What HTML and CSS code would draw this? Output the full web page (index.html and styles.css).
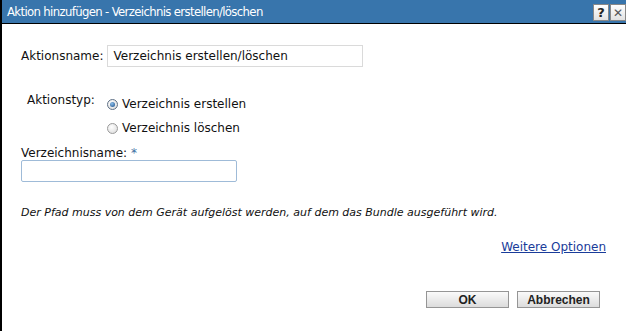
FILE: index.html
```html
<!DOCTYPE html>
<html lang="de">
<head>
    <meta charset="UTF-8">
    <title>Aktion hinzufügen</title>
    <link rel="stylesheet" href="styles.css">
</head>
<body>
    <div class="dialog">
        <div class="titlebar">
            <span class="title">Aktion hinzufügen - Verzeichnis erstellen/löschen</span>
            <div class="title-buttons">
                <span class="tbtn">?</span>
                <span class="tbtn close">&#x2715;</span>
            </div>
        </div>

        <div class="content">
            <div class="row name-row">
                <label for="action-name">Aktionsname:</label>
                <input type="text" id="action-name" class="text-input wide" value="Verzeichnis erstellen/löschen">
            </div>

            <div class="row type-row">
                <span class="type-label">Aktionstyp:</span>
                <div class="radios">
                    <label class="radio"><span class="dot checked"></span>Verzeichnis erstellen</label>
                    <label class="radio"><span class="dot"></span>Verzeichnis löschen</label>
                </div>
            </div>

            <div class="field">
                <label for="dir-name">Verzeichnisname: <span class="req">*</span></label>
                <input type="text" id="dir-name" class="text-input">
            </div>

            <p class="hint">Der Pfad muss von dem Gerät aufgelöst werden, auf dem das Bundle ausgeführt wird.</p>

            <div class="more">
                <a href="#">Weitere Optionen</a>
            </div>

            <div class="actions">
                <button type="button">OK</button>
                <button type="button">Abbrechen</button>
            </div>
        </div>
    </div>
</body>
</html>
```

FILE: styles.css
```css
body {
    margin: 0;
    background: #ffffff;
    font-family: "DejaVu Sans", sans-serif;
    font-size: 12px;
    color: #111;
}

.dialog {
    width: 626px;
    height: 331px;
    border-left: 2px solid #000;
    box-sizing: border-box;
}

.titlebar {
    height: 23px;
    background-color: #3875ac;
    border-bottom: 1px solid #000;
    display: flex;
    align-items: center;
    justify-content: space-between;
    padding-left: 5px;
}

.title {
    color: #fff;
    font: 13px "DejaVu Sans Condensed", sans-serif;
    letter-spacing: -0.65px;
}

.title-buttons {
    display: flex;
    gap: 1px;
    align-self: flex-end;
    margin-bottom: 2px;
}

.tbtn {
    width: 16px;
    height: 17px;
    background: linear-gradient(#ffffff, #e2e2e2);
    border: 1px solid #888;
    box-sizing: border-box;
    font: bold 13px "DejaVu Sans", sans-serif;
    color: #222;
    display: flex;
    align-items: center;
    justify-content: center;
}

.tbtn.close {
    font-weight: normal;
    font-size: 12px;
    color: #555;
}

.content {
    padding: 21px 0 0 19px;
}

.row {
    display: flex;
}

.name-row {
    align-items: center;
    gap: 4px;
}

.text-input {
    height: 22px;
    border: 1px solid #dadada;
    box-sizing: border-box;
    padding: 0 5px;
    font: 12px "DejaVu Sans", sans-serif;
    color: #111;
}

.text-input.wide {
    width: 256px;
}

.type-row {
    margin-top: 25px;
    align-items: flex-start;
}

.type-label {
    margin: 1px 0 0 6px;
    width: 80px;
}

.radios {
    display: flex;
    flex-direction: column;
    gap: 10px;
    margin-top: 5px;
}

.radio {
    display: flex;
    align-items: center;
    gap: 4px;
}

.dot {
    width: 11px;
    height: 11px;
    border-radius: 50%;
    border: 1px solid #9a9a9a;
    background: radial-gradient(circle at 40% 35%, #ffffff, #d8d8d8);
    box-sizing: border-box;
    position: relative;
}

.dot.checked {
    border-color: #5f7186;
}

.dot.checked::after {
    content: "";
    position: absolute;
    left: 2px;
    top: 2px;
    width: 5px;
    height: 5px;
    border-radius: 50%;
    background: radial-gradient(circle at 40% 35%, #8cc0ee, #1a4a80);
}

.field {
    margin-top: 11px;
}

.field label {
    display: block;
    margin-bottom: 0;
}

.req {
    color: #3c6ea3;
}

.field .text-input {
    width: 216px;
    border-color: #9fbbd8;
    border-radius: 2px;
}

.hint {
    font-style: italic;
    font-size: 11px;
    margin: 24px 0 0;
}

.more {
    text-align: right;
    margin: 21px 20px 0 0;
}

.more a {
    color: #1a3c9a;
}

.actions {
    display: flex;
    justify-content: flex-end;
    gap: 8px;
    margin: 37px 26px 0 0;
}

button {
    width: 83px;
    height: 17px;
    border: 1px solid #959595;
    background: linear-gradient(#fafafa, #dcdcdc);
    font: bold 12px "Liberation Sans", Arial, sans-serif;
    color: #222;
    padding: 0;
}
```
